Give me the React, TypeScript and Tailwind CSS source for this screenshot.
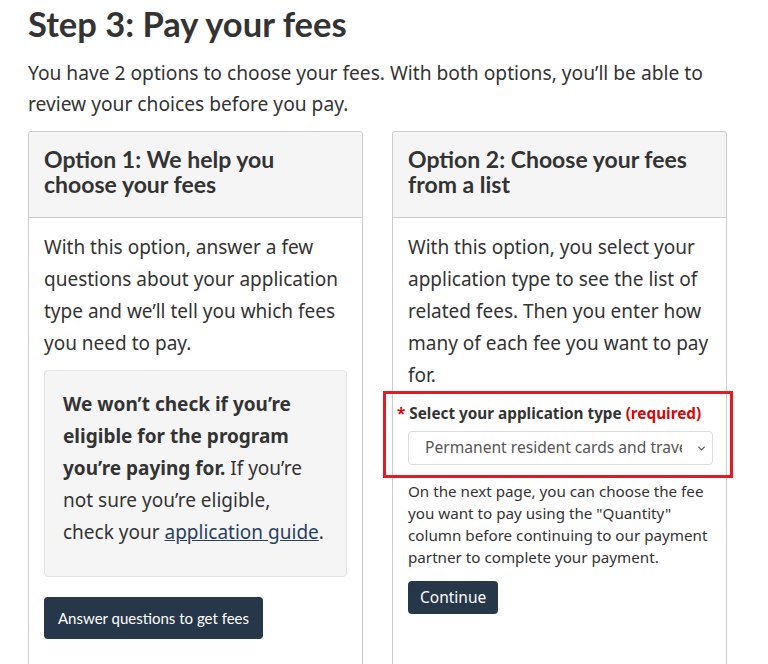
import { ChevronDown } from "lucide-react"

export default function App() {
  return (
    <div className="w-[768px] h-[664px] overflow-hidden bg-white text-[#333] font-['Noto_Sans',sans-serif]">
      <div className="pl-[28px] pt-[4px]">
        <h2 className="font-['Lato',sans-serif] font-bold text-[34.5px] leading-[40px] text-[#333]">
          Step 3: Pay your fees
        </h2>
        <p className="mt-[13px] w-[700px] text-[19.2px] leading-[31px]">
          You have 2 options to choose your fees. With both options, you’ll be able to review your choices before you pay.
        </p>

        <div className="mt-[12px] grid grid-cols-[335px_335px] gap-[29px]">
          {/* Option 1 */}
          <div className="border border-[#ccc] rounded-[3px] h-[600px]">
            <div className="bg-[#f5f5f5] border-b border-[#ccc] px-[15px] pt-[15px] pb-[20px] rounded-t-[3px]">
              <h3 className="font-['Lato',sans-serif] font-bold text-[23px] leading-[25px]">
                Option 1: We help you choose your fees
              </h3>
            </div>
            <div className="px-[15px] pt-[13px]">
              <p className="text-[19px] leading-[32px]">
                With this option, answer a few questions about your application type and we’ll tell you which fees you need to pay.
              </p>
              <div className="mt-[11px] bg-[#f5f5f5] border border-[#e3e3e3] rounded-[4px] pl-[18px] pr-[12px] pt-[17px] pb-[28px] text-[19px] leading-[32px]">
                <strong className="font-bold">We won’t check if you’re eligible for the program you’re paying for.</strong>{" "}
                If you’re not sure you’re eligible,
                <br />
                check your <a href="#" className="text-[#284162] underline">application guide</a>.
              </div>
              <button className="mt-[20px] h-[42px] px-[14px] bg-[#26374a] text-white rounded-[4px] font-['Lato',sans-serif] text-[15px]">
                Answer questions to get fees
              </button>
            </div>
          </div>

          {/* Option 2 */}
          <div className="border border-[#ccc] rounded-[3px] h-[600px]">
            <div className="bg-[#f5f5f5] border-b border-[#ccc] px-[15px] pt-[15px] pb-[20px] rounded-t-[3px]">
              <h3 className="font-['Lato',sans-serif] font-bold text-[23px] leading-[25px]">
                Option 2: Choose your fees from a list
              </h3>
            </div>
            <div className="px-[15px] pt-[13px]">
              <p className="text-[19px] leading-[32px]">
                With this option, you select your application type to see the list of related fees. Then you enter how many of each fee you want to pay for.
              </p>
              <div className="relative pt-[11px]">
                {/* highlight annotation */}
                <div className="absolute left-[-25px] right-[-22px] top-0 h-[87px] border-[3px] border-[#e41b23] pointer-events-none" />
                <label className="block text-[15.3px] leading-[22px] font-bold">
                  <span className="text-[#d3080c] mr-[4px] ml-[-11px]">*</span>
                  Select your application type{" "}
                  <span className="text-[#d3080c]">(required)</span>
                </label>
                <div className="relative mt-[7px]">
                  <select className="appearance-none w-[305px] h-[34px] border border-[#ddd] rounded-[4px] bg-white pl-[16px] pr-[30px] text-[15.6px] text-[#555]">
                    <option>Permanent resident cards and travel documents</option>
                  </select>
                  <ChevronDown className="absolute right-[4px] top-[12px] w-[11px] h-[11px] text-[#555]" strokeWidth={3} />
                </div>
                <p className="mt-[15px] text-[15.2px] leading-[22px]">
                  On the next page, you can choose the fee you want to pay using the "Quantity" column before continuing to our payment partner to complete your payment.
                </p>
                <button className="mt-[13px] h-[33px] px-[12px] bg-[#26374a] text-white rounded-[4px] text-[15.5px]">
                  Continue
                </button>
              </div>
            </div>
          </div>
        </div>
      </div>
    </div>
  )
}
